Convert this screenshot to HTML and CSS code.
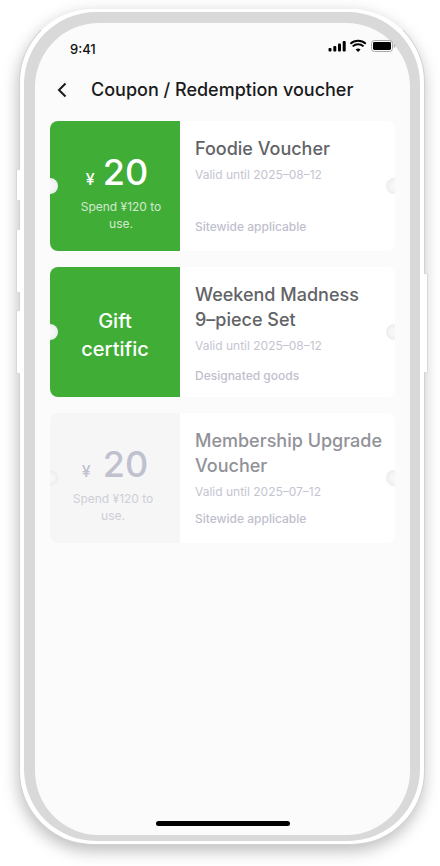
FILE: index.html
```html
<!DOCTYPE html>
<html lang="en">
<head>
<meta charset="utf-8">
<meta name="viewport" content="width=device-width, initial-scale=1">
<title>Coupon / Redemption voucher</title>
<link rel="stylesheet" href="styles.css">
</head>
<body>
<div class="phone">
  <span class="key key-mute"></span>
  <span class="key key-up"></span>
  <span class="key key-down"></span>
  <span class="key key-power"></span>
  <div class="bezel">
    <div class="screen">
      <div class="status">
        <span class="time">9:41</span>
        <svg class="status-icons" width="68" height="14" viewBox="0 0 68 14" aria-hidden="true">
          <rect x="1.500" y="9" width="3" height="3.500" rx="1"/>
          <rect x="6.300" y="7" width="3" height="5.500" rx="1"/>
          <rect x="11" y="4.500" width="3" height="8" rx="1"/>
          <rect x="15.700" y="2" width="3" height="10.500" rx="1"/>
          <path d="M24 5.500a10.500 10.500 0 0 1 14.200 0l1.200-1.500a12.400 12.400 0 0 0-16.600 0z"/>
          <path d="M26.300 8.100a7 7 0 0 1 9.600 0l1.300-1.400a9 9 0 0 0-12.200 0z"/>
          <path d="M28.600 10.500l2.500 2.500 2.500-2.500a3.900 3.900 0 0 0-5 0z"/>
          <rect x="44.500" y="1.500" width="21" height="11" rx="3" fill="none" stroke="#a8a8a8"/>
          <rect x="46" y="3" width="18" height="8" rx="1.400"/>
          <path d="M66.800 5v4a2.200 2.200 0 0 0 0-4z" fill="#a8a8a8"/>
        </svg>
      </div>
      <header class="header">
        <button class="back" type="button" aria-label="Back">
          <svg width="10" height="16" viewBox="0 0 10 16" aria-hidden="true"><path d="M8.500 1.500L2 8l6.500 6.500" fill="none" stroke="#1a1a1c" stroke-width="2"/></svg>
        </button>
        <h1 class="heading">Coupon / Redemption voucher</h1>
      </header>
      <main class="list">
        <article class="coupon">
          <div class="value value-inset">
            <p class="amount"><span class="currency">¥</span><span>20</span></p>
            <p class="condition">Spend ¥120 to<br>use.</p>
          </div>
          <div class="info">
            <h2 class="name">Foodie Voucher</h2>
            <p class="date">Valid until 2025–08–12</p>
            <p class="scope">Sitewide applicable</p>
          </div>
        </article>
        <article class="coupon">
          <div class="value">
            <p class="gift">Gift<br>certific</p>
          </div>
          <div class="info info-goods">
            <h2 class="name">Weekend Madness<br>9–piece Set</h2>
            <p class="date">Valid until 2025–08–12</p>
            <p class="scope">Designated goods</p>
          </div>
        </article>
        <article class="coupon expired">
          <div class="value">
            <p class="amount"><span class="currency">¥</span><span>20</span></p>
            <p class="condition">Spend ¥120 to<br>use.</p>
          </div>
          <div class="info">
            <h2 class="name">Membership Upgrade Voucher</h2>
            <p class="date">Valid until 2025–07–12</p>
            <p class="scope">Sitewide applicable</p>
          </div>
        </article>
      </main>
      <div class="home"></div>
    </div>
  </div>
</div>
</body>
</html>
```
FILE: styles.css
```css
* {
  box-sizing: border-box;
}

body {
  display: flex;
  min-height: 100vh;
  margin: 0;
  padding: 8px 15px 21px 19px;
  background: #fff;
  font-family: Inter, "Liberation Sans", sans-serif;
}

h1, h2, p {
  margin: 0;
  font-weight: 500;
}

.phone {
  position: relative;
  display: flex;
  flex: 1;
  padding: 3px 4px;
  border: 1px solid #d2d2d2;
  border-top-color: #f0f0f0;
  border-radius: 74px;
  background: #fff;
  box-shadow: -1px 6px 16px rgba(0, 0, 0, 0.26);
}

.key {
  position: absolute;
  left: -4px;
  width: 4px;
  height: 64px;
  border: 1px solid #d8d8d8;
  border-right: 0;
  border-radius: 2px 0 0 2px;
  background: #fff;
}

.key-mute {
  top: 160px;
  height: 32px;
}

.key-up {
  top: 220px;
}

.key-down {
  top: 301px;
}

.key-power {
  top: 264px;
  right: -4px;
  left: auto;
  height: 100px;
  border: 1px solid #d8d8d8;
  border-left: 0;
  border-radius: 0 2px 2px 0;
}

.bezel {
  display: flex;
  flex: 1;
  padding: 11px 10px 6px 11px;
  border-radius: 72px;
  background: #d9d9d9;
}

.screen {
  display: flex;
  flex: 1;
  flex-direction: column;
  min-width: 0;
  padding: 14px 15px 9px;
  border-radius: 64px;
  background: #fbfbfb;
}

.status {
  display: flex;
  align-items: center;
  justify-content: space-between;
  height: 24px;
  padding-left: 20px;
}

.time {
  color: #111;
  font-size: 13px;
  font-weight: 500;
}

.status-icons {
  margin-bottom: 6px;
}

.header {
  display: flex;
  align-items: center;
  height: 60px;
  padding-bottom: 2px;
}

.back {
  display: flex;
  width: 41px;
  padding: 6px 7px;
  border: 0;
  background: none;
}

.heading {
  color: #1a1a1c;
  font-size: 18px;
  line-height: 26px;
  white-space: nowrap;
}

.list {
  display: flex;
  flex: 1;
  flex-direction: column;
  gap: 16px;
}

.coupon {
  position: relative;
  display: flex;
  min-height: 130px;
  overflow: hidden;
  border-radius: 8px;
  background: #fff;
}

.coupon::before,
.coupon::after {
  position: absolute;
  top: 57px;
  left: -8px;
  width: 16px;
  height: 16px;
  border-radius: 50%;
  background: #f8f8f8;
  box-shadow: inset 0 0 6px rgba(0, 0, 0, 0.08);
  content: "";
}

.coupon::after {
  right: -7px;
  left: auto;
}

.value {
  display: flex;
  flex: 0 0 130px;
  flex-direction: column;
  align-items: center;
  justify-content: center;
  padding: 0 4px 0 0;
  background: #40ad36;
  color: #fff;
  text-align: center;
}

.value-inset {
  padding: 0 0 0 12px;
}

.amount {
  display: flex;
  gap: 8px;
  align-items: baseline;
  padding: 12px 8px 0 0;
  font-size: 36px;
  line-height: 38px;
}

.currency {
  font-size: 16px;
}

.condition {
  font-size: 12px;
  font-weight: 400;
  line-height: 17px;
  opacity: 0.75;
}

.gift {
  padding: 6px 0 0 4px;
  font-size: 20px;
  line-height: 28px;
}

.info {
  display: flex;
  flex: 1;
  flex-direction: column;
  min-width: 0;
  padding: 15px 10px 16px 15px;
}

.info-goods {
  padding-bottom: 13px;
}

.name {
  color: #626366;
  font-size: 18px;
  line-height: 25px;
}

.date {
  padding-top: 5px;
  color: #c4c5d1;
  font-size: 12px;
  font-weight: 400;
  line-height: 17px;
}

.scope {
  margin-top: auto;
  color: #bfc0ce;
  font-size: 12px;
  line-height: 17px;
}

.expired .value {
  background: #f6f6f6;
  color: #c0c1ce;
}

.expired .amount {
  gap: 12px;
  padding-right: 0;
  padding-left: 4px;
}

.expired .name {
  color: #919298;
}

.home {
  align-self: center;
  width: 134px;
  height: 5px;
  border-radius: 3px;
  background: #000;
}
```
